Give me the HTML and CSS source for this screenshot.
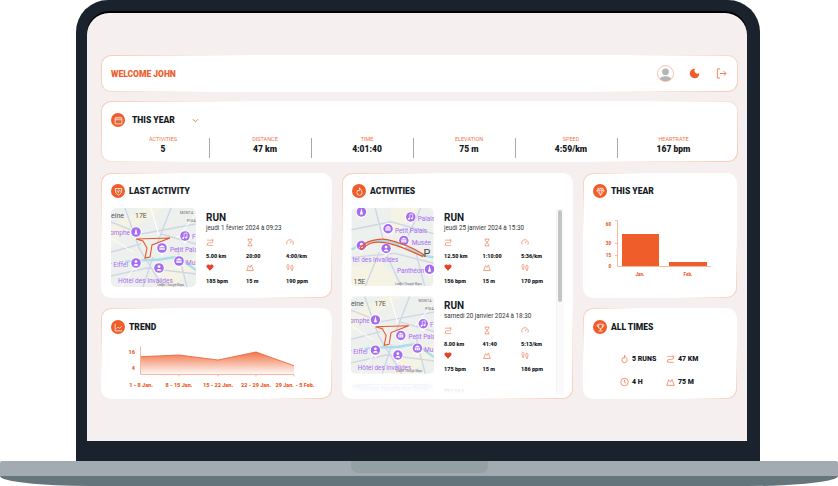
FILE: index.html
```html
<!DOCTYPE html>
<html lang="fr">
<head>
  <meta charset="UTF-8">
  <title>Welcome John</title>
  <link rel="stylesheet" href="styles.css">
</head>
<body>
  <svg class="defs" width="0" height="0">
    <symbol id="i-route" viewBox="0 0 12 12"><path d="M1.500 2.500H8a2 2 0 0 1 0 4H4a2 2 0 0 0 0 4h6.500M9 .8l2 1.700-2 1.700M3 8.800l-2 1.700" fill="none" stroke="currentColor" stroke-width=".9"/></symbol>
    <symbol id="i-time" viewBox="0 0 12 12"><path d="M2.500 1h7M2.500 11h7M3.500 1v2l5 6v2M8.500 1v2l-5 6v2" fill="none" stroke="currentColor"/></symbol>
    <symbol id="i-speed" viewBox="0 0 12 12"><path d="M1.500 9a5 5 0 1 1 9 0M6 7l2-3" fill="none" stroke="currentColor"/></symbol>
    <symbol id="i-heart" viewBox="0 0 12 12"><path d="M6 11 1 5.500C0 3.500 1.500 1.500 3.500 1.500 4.800 1.500 5.500 2.300 6 3c.5-.7 1.200-1.500 2.500-1.500 2 0 3.500 2 2.500 4z" fill="currentColor"/></symbol>
    <symbol id="i-elev" viewBox="0 0 12 12"><path d="M1 10.500 3.500 3 6 6l2-3.500 3 8z" fill="none" stroke="currentColor"/></symbol>
    <symbol id="i-feet" viewBox="0 0 12 12"><path d="M2 2c1-1.500 2.500 0 2.500 2S4 7.500 3.500 9 2 7 1.500 5 1.500 3 2 2zM8 3c1-1 2.500 0 2.500 2s-.5 4-1 5.500S8 9.500 7.500 7.500 7.300 4 8 3z" fill="none" stroke="currentColor"/></symbol>
    <symbol id="i-flame" viewBox="0 0 12 12"><path d="M6 1c.5 2 3.500 3.500 3.500 6.500A3.500 3.500 0 0 1 2.500 7.500C2.500 6 3.500 5 4 4c.5.8 1 1.200 1.500 1.300C6 4 6.200 2.500 6 1z" fill="none" stroke="currentColor"/></symbol>
    <symbol id="i-clock" viewBox="0 0 12 12"><circle cx="6" cy="6" r="5" fill="none" stroke="currentColor"/><path d="M6 3v3.300l2 1.200" fill="none" stroke="currentColor"/></symbol>

    <symbol id="pin" viewBox="0 0 12 14"><path d="M6 14 3.500 10.500h5z" fill="#fff"/><circle cx="6" cy="6" r="5.800" fill="#fff"/><circle cx="6" cy="6" r="4.800" fill="#a66cf0"/><circle cx="6" cy="4.600" r="1.400" fill="#fff"/><path d="M3.600 8.700c0-2.300 4.800-2.300 4.800 0z" fill="#fff"/></symbol>
    <symbol id="pin-note" viewBox="0 0 12 14"><path d="M6 14 3.500 10.500h5z" fill="#fff"/><circle cx="6" cy="6" r="5.800" fill="#fff"/><circle cx="6" cy="6" r="4.800" fill="#a66cf0"/><path d="M5 8V3.500l3-.6V7.500" fill="none" stroke="#fff" stroke-width=".7"/><circle cx="4.200" cy="8" r="1" fill="#fff"/><circle cx="7.200" cy="7.500" r="1" fill="#fff"/></symbol>
    <symbol id="pin-museum" viewBox="0 0 12 14"><path d="M6 14 3.500 10.500h5z" fill="#fff"/><circle cx="6" cy="6" r="5.800" fill="#fff"/><circle cx="6" cy="6" r="4.800" fill="#a66cf0"/><path d="M2.800 5 6 3l3.200 2zM3.400 5.500h5.200v2.500H3.400z" fill="#fff"/><path d="M5 5.500V8M7 5.500V8" stroke="#a66cf0" stroke-width=".5"/></symbol>
    <symbol id="pin-tower" viewBox="0 0 12 14"><path d="M6 14 3.500 10.500h5z" fill="#fff"/><circle cx="6" cy="6" r="5.800" fill="#fff"/><circle cx="6" cy="6" r="4.800" fill="#a66cf0"/><path d="M6 2.300 7.600 8.500H4.400z" fill="#fff"/></symbol>

    <symbol id="map-a" viewBox="0 0 85 79">
      <rect width="85" height="79" fill="#eef0ee"/>
      <path d="M0 18 34 0h18L0 36zM52 62l33-14v12L60 79H44z" fill="#f5f3e4"/>
      <path d="M0 14 30 26 85 16M14 0l14 40 24 39M60 0 46 36M85 36 50 26M0 44l30-8M0 68l36-8 49 6M66 40l10 39M32 79l10-30" fill="none" stroke="#cfd6e4" stroke-width="1.400"/>
      <path d="M0 30 22 44M40 0l8 28M85 6 66 30M10 79 24 58" fill="none" stroke="#fff" stroke-width="1"/>
      <path d="M14 54c12-3 28-1 38-3s16-3 20 1 8 7 13 10" fill="none" stroke="#acdde9" stroke-width="2.400"/>
      <text class="map-dark" x="0" y="10">eine</text>
      <text class="map-dark" x="24" y="10">17E</text>
      <text class="map-tiny" x="69" y="6">MONTA</text>
      <text class="map-tiny" x="76" y="14">PIGA</text>
      <text class="map-label" x="19" y="27" text-anchor="end">omphe</text>
      <text class="map-label" x="81" y="31">F</text>
      <text class="map-label" x="59" y="44">Petit Pala</text>
      <text class="map-label" x="75" y="57">Mu</text>
      <text class="map-label" x="17" y="59" text-anchor="end">r Eiffel</text>
      <text class="map-label" x="7" y="75">Hôtel des Invalides</text>
      <use href="#pin-tower" x="19" y="18" width="12" height="14"/>
      <use href="#pin-note" x="68" y="22" width="12" height="14"/>
      <use href="#pin-museum" x="45" y="34" width="12" height="14"/>
      <use href="#pin-museum" x="62" y="47" width="12" height="14"/>
      <use href="#pin" x="19" y="49" width="12" height="14"/>
      <use href="#pin" x="42" y="54" width="12" height="14"/>
      <path d="M25 31 59 30 41 37 39 49 34 50 36 40 32 33z" fill="none" stroke="#e8562a" stroke-width="1.100"/>
      <text class="map-credit" x="46" y="77.500">Leaflet | Google Maps</text>
    </symbol>

    <symbol id="map-b" viewBox="0 0 83 79">
      <rect width="83" height="79" fill="#eef0ee"/>
      <path d="M40 0h30L40 30zM0 60l30-6 20 25H0z" fill="#f5f3e4"/>
      <path d="M0 22 40 14 83 26M24 0l12 48 14 31M70 0 52 40M0 50l44-4 39 10M14 79l14-34M66 48l8 31" fill="none" stroke="#cfd6e4" stroke-width="1.400"/>
      <path d="M0 42c14-8 28-10 38-8s22 8 34 14l11 2" fill="none" stroke="#acdde9" stroke-width="2.400"/>
      <text class="map-label" x="67" y="13">Palais</text>
      <text class="map-label" x="44" y="25">Petit Palais</text>
      <text class="map-label" x="61" y="37">Musée</text>
      <text class="map-label" x="1" y="55">tel des Invalides</text>
      <text class="map-label" x="46" y="66">Panthéon</text>
      <text class="map-big" x="73" y="50">P</text>
      <text class="map-dark" x="2" y="77">15E</text>
      <use href="#pin-tower" x="4" y="-2" width="12" height="14"/>
      <use href="#pin-note" x="54" y="3" width="12" height="14"/>
      <use href="#pin-museum" x="31" y="15" width="12" height="14"/>
      <use href="#pin-museum" x="47" y="27" width="12" height="14"/>
      <use href="#pin" x="4" y="32" width="12" height="14"/>
      <use href="#pin" x="29" y="35" width="12" height="14"/>
      <use href="#pin-tower" x="73" y="56" width="12" height="14"/>
      <path d="M9 40C14 34 26 30 36 32S58 38 73 47L72 49C60 44 48 37 34 35S16 37 10 42z" fill="none" stroke="#e8562a" stroke-width="1.200"/>
      <text class="map-credit" x="44" y="77.500">Leaflet | Google Maps</text>
    </symbol>

    <symbol id="map-c" viewBox="0 0 83 79">
      <rect width="83" height="79" fill="#eef0ee"/>
      <path d="M0 3C20-2 60-2 83 3" fill="none" stroke="#acdde9" stroke-width="2.400"/>
      <text class="map-label" x="5" y="7">Puteaux Neuilly-sur-Seine</text>
    </symbol>
  </svg>

  <div class="laptop">
    <div class="bezel">
      <main class="screen">

        <header class="card header">
          <span class="welcome">WELCOME JOHN</span>
          <div class="header-icons">
            <svg viewBox="0 0 17 17" width="17" height="17">
              <defs><clipPath id="avatar-clip"><circle cx="8.500" cy="8.500" r="7.800"/></clipPath></defs>
              <g clip-path="url(#avatar-clip)" fill="#b5b5b5">
                <circle cx="8.500" cy="6.800" r="3.400"/>
                <ellipse cx="8.500" cy="15" rx="6" ry="3.800"/>
              </g>
              <circle cx="8.500" cy="8.500" r="8" fill="none" stroke="#f2a98c" stroke-width=".7"/>
            </svg>
            <svg class="moon" viewBox="0 0 12 12" width="11" height="11"><path d="M6.500.8A5.200 5.200 0 1 0 11.200 5.500 3.400 3.400 0 0 1 6.500.8z" fill="#ee5d2a"/></svg>
            <svg viewBox="0 0 12 12" width="11" height="11"><path d="M4.500 1H1.500v10h3M4.500 6H11M8.500 3.500 11 6 8.500 8.500" fill="none" stroke="#f1764a" stroke-width="1"/></svg>
          </div>
        </header>

        <section class="card year">
          <div class="card-title">
            <span class="badge">
              <svg viewBox="0 0 12 12" width="9" height="9"><path d="M1.500 2.500h9v8h-9zM1.500 5h9M4 1v2M8 1v2" fill="none" stroke="#fff"/></svg>
            </span>
            <h2 class="year-name">THIS YEAR</h2>
            <svg class="chevron" viewBox="0 0 8 5" width="7" height="5"><path d="M1 1l3 3 3-3" fill="none" stroke="#f1764a" stroke-width="1.100"/></svg>
          </div>
          <div class="year-stats">
            <div class="year-stat"><span>ACTIVITIES</span><b>5</b></div>
            <div class="year-stat"><span>DISTANCE</span><b>47 km</b></div>
            <div class="year-stat"><span>TIME</span><b>4:01:40</b></div>
            <div class="year-stat"><span>ELEVATION</span><b>75 m</b></div>
            <div class="year-stat"><span>SPEED</span><b>4:59/km</b></div>
            <div class="year-stat"><span>HEARTRATE</span><b>167 bpm</b></div>
          </div>
        </section>

        <div class="grid">
          <section class="card last">
            <div class="card-title">
              <span class="badge">
                <svg viewBox="0 0 12 12" width="9" height="9"><path d="M1.500 2 10.500 2 9.500 8 6 11 2.500 8zM3.500 5l3 1-1 2M6 3.500l3 2" fill="none" stroke="#fff"/></svg>
              </span>
              <h2>LAST ACTIVITY</h2>
            </div>
            <article class="activity">
              <svg class="map" width="85" height="79"><use href="#map-a"/></svg>
              <div class="info">
                <h3>RUN</h3>
                <p>jeudi 1 février 2024 à 09:23</p>
                <div class="stats">
                  <div><svg><use href="#i-route"/></svg><b>5.00 km</b></div>
                  <div><svg><use href="#i-time"/></svg><b>20:00</b></div>
                  <div><svg><use href="#i-speed"/></svg><b>4:00/km</b></div>
                  <div><svg class="solid"><use href="#i-heart"/></svg><b>185 bpm</b></div>
                  <div><svg><use href="#i-elev"/></svg><b>15 m</b></div>
                  <div><svg><use href="#i-feet"/></svg><b>190 ppm</b></div>
                </div>
              </div>
            </article>
          </section>

          <section class="card activities">
            <div class="card-title">
              <span class="badge">
                <svg viewBox="0 0 12 12" width="9" height="9"><use href="#i-flame"/></svg>
              </span>
              <h2>ACTIVITIES</h2>
            </div>
            <div class="list">
              <article class="activity">
                <svg class="map" width="83" height="78"><use href="#map-b"/></svg>
                <div class="info">
                  <h3>RUN</h3>
                  <p>jeudi 25 janvier 2024 à 15:30</p>
                  <div class="stats">
                    <div><svg><use href="#i-route"/></svg><b>12.50 km</b></div>
                    <div><svg><use href="#i-time"/></svg><b>1:10:00</b></div>
                    <div><svg><use href="#i-speed"/></svg><b>5:36/km</b></div>
                    <div><svg class="solid"><use href="#i-heart"/></svg><b>156 bpm</b></div>
                    <div><svg><use href="#i-elev"/></svg><b>15 m</b></div>
                    <div><svg><use href="#i-feet"/></svg><b>170 ppm</b></div>
                  </div>
                </div>
              </article>
              <article class="activity">
                <svg class="map" width="83" height="78"><use href="#map-a"/></svg>
                <div class="info">
                  <h3>RUN</h3>
                  <p>samedi 20 janvier 2024 à 18:30</p>
                  <div class="stats">
                    <div><svg><use href="#i-route"/></svg><b>8.00 km</b></div>
                    <div><svg><use href="#i-time"/></svg><b>41:40</b></div>
                    <div><svg><use href="#i-speed"/></svg><b>5:13/km</b></div>
                    <div><svg class="solid"><use href="#i-heart"/></svg><b>175 bpm</b></div>
                    <div><svg><use href="#i-elev"/></svg><b>15 m</b></div>
                    <div><svg><use href="#i-feet"/></svg><b>186 ppm</b></div>
                  </div>
                </div>
              </article>
              <article class="activity">
                <svg class="map" width="83" height="78"><use href="#map-c"/></svg>
                <div class="info">
                  <h3>RUN</h3>
                </div>
              </article>
            </div>
            <div class="scrollbar"><span></span></div>
          </section>

          <section class="card months">
            <div class="card-title">
              <span class="badge">
                <svg viewBox="0 0 12 12" width="9" height="9"><path d="M3 1.500h6L11 5 6 11 1 5zM1 5h10M4 5l2 6 2-6M3 1.500 4 5 6 1.500 8 5 9 1.500" fill="none" stroke="#fff" stroke-width=".8"/></svg>
              </span>
              <h2>THIS YEAR</h2>
            </div>
            <svg class="chart" viewBox="0 0 154 66" width="154" height="66">
              <g class="chart-ticks">
                <text x="28" y="12" text-anchor="end">60</text>
                <text x="28" y="31" text-anchor="end">30</text>
                <text x="28" y="42.500" text-anchor="end">15</text>
                <text x="28" y="54" text-anchor="end">0</text>
                <text x="57" y="62" text-anchor="middle">Jan.</text>
                <text x="105" y="62" text-anchor="middle">Feb.</text>
              </g>
              <rect x="39" y="20" width="37" height="32" fill="#ee5d2a"/>
              <rect x="86" y="48" width="38" height="4" fill="#ee5d2a"/>
              <path d="M32 6.500h2.500v46H128M32 29.500h2.500M32 41.500h2.500" fill="none" stroke="#f8b9a1"/>
            </svg>
          </section>

          <section class="card trend">
            <div class="card-title">
              <span class="badge">
                <svg viewBox="0 0 12 12" width="9" height="9"><path d="M1.500 1v9.500H11M3.500 7.500l2-2 2 1.500 3-3" fill="none" stroke="#fff"/></svg>
              </span>
              <h2>TREND</h2>
            </div>
            <svg class="chart" viewBox="0 0 231 52" width="231" height="52">
              <defs>
                <linearGradient id="trend-fill" x1="0" y1="0" x2="0" y2="1">
                  <stop offset="0" stop-color="#ee5d2a" stop-opacity=".85"/>
                  <stop offset="1" stop-color="#ee5d2a" stop-opacity=".05"/>
                </linearGradient>
              </defs>
              <path d="M40 16.700 78 15 117 20 155 12 193 25.700V34H40z" fill="url(#trend-fill)"/>
              <path d="M40 16.700 78 15 117 20 155 12 193 25.700" fill="none" stroke="#ee5d2a" stroke-width=".8"/>
              <path d="M39.500 6.500V34.500H193M78 34.500v2M117 34.500v2M155 34.500v2M193 34.500v2" fill="none" stroke="#f8b9a1"/>
              <g class="chart-ticks trend-ticks">
                <text x="34" y="13.500" text-anchor="end">16</text>
                <text x="34" y="29.500" text-anchor="end">4</text>
                <text x="40" y="47" text-anchor="middle">1 - 8 Jan.</text>
                <text x="78" y="47" text-anchor="middle">8 - 15 Jan.</text>
                <text x="117" y="47" text-anchor="middle">15 - 22 Jan.</text>
                <text x="155" y="47" text-anchor="middle">22 - 29 Jan.</text>
                <text x="194" y="47" text-anchor="middle">29 Jan. - 5 Feb.</text>
              </g>
            </svg>
          </section>

          <section class="card times">
            <div class="card-title">
              <span class="badge">
                <svg viewBox="0 0 12 12" width="9" height="9"><path d="M3.500 1.500h5V5a2.500 2.500 0 0 1-5 0zM3.500 2.500H1.500c0 2 .8 3 2.200 3.300M8.500 2.500h2c0 2-.8 3-2.200 3.300M6 7.500v2M3.500 10.500h5" fill="none" stroke="#fff"/></svg>
              </span>
              <h2>ALL TIMES</h2>
            </div>
            <div class="totals">
              <div><svg><use href="#i-flame"/></svg><b>5 RUNS</b></div>
              <div><svg><use href="#i-route"/></svg><b>47 KM</b></div>
              <div><svg><use href="#i-clock"/></svg><b>4 H</b></div>
              <div><svg><use href="#i-elev"/></svg><b>75 M</b></div>
            </div>
          </section>
        </div>

      </main>
    </div>
    <div class="base"><div class="notch"></div></div>
    <div class="base-foot"></div>
  </div>
</body>
</html>
```

FILE: styles.css
```css
/* laptop frame */
html, body { margin: 0; height: 486px; overflow: hidden; background: #fff; }
body { font-family: Roboto, "Liberation Sans", sans-serif; color: #151a24; }
.defs { position: absolute; }

.bezel { width: 684px; height: 461px; box-sizing: border-box; margin-left: 76px; padding: 13px 13px 20px 11px; background: #1a222e; border-radius: 32px 32px 0 0; }
.screen { height: 428px; box-sizing: border-box; padding: 42px 9px 0 14px; background: #f5efef; border-radius: 22px 22px 0 0; box-shadow: 0 -2px 0 #000; }
.base { height: 15px; display: flex; justify-content: center; background: #a2abb1; border-radius: 2px 2px 0 0; }
.notch { width: 137px; height: 12px; background: #93a0a4; border-radius: 0 0 7px 7px; }
.base-foot { height: 10px; background: #64757c; border-radius: 0 0 90px 90px / 0 0 10px 10px; }

/* cards */
.card { box-sizing: border-box; border: 1px solid transparent; border-radius: 10px; background: linear-gradient(#fff, #fff) padding-box, linear-gradient(135deg, #f8c9b2, #fff 22%, #fff 78%, #f8c9b2) border-box; }
.card-title { display: flex; align-items: center; gap: 4px; height: 14px; margin-left: 9px; }
.card-title h2 { margin: 0; font-size: 8.500px; font-weight: 900; }
.badge { width: 14px; height: 14px; flex: none; display: flex; align-items: center; justify-content: center; border-radius: 50%; background: #ee5d2a; color: #fff; }

.header { height: 37px; display: flex; align-items: center; justify-content: space-between; padding: 0 10px 0 9px; }
.welcome { font-size: 8.500px; font-weight: 900; color: #ee5d2a; }
.header-icons { display: flex; align-items: center; gap: 15px; margin-top: -1px; }
.moon { margin-right: 1px; }

.year { height: 61px; margin-top: 9px; padding-top: 11px; }
.year-name { margin-left: 3px !important; }
.chevron { margin-left: 13px; }
.year-stats { display: grid; grid-template-columns: repeat(6, 93px); gap: 9px; margin: 11px 0 0 15px; }
.year-stat { height: 20px; display: flex; flex-direction: column; align-items: center; border-right: 1px solid #aaa; }
.year-stat:last-child { border-right: 0; }
.year-stat span { font-size: 5.500px; line-height: 3px; color: #f1764a; }
.year-stat b { font-size: 8.500px; line-height: 16px; font-weight: 900; }

.grid { display: grid; grid-template-columns: 231px 231px 154px; grid-template-rows: 125px 91px; gap: 10px; margin-top: 11px; }
.last, .activities, .months { padding-top: 10px; }
.trend, .times { padding-top: 11px; }
.activities { grid-column: 2; grid-row: 1 / 3; position: relative; }
.months { grid-column: 3; grid-row: 1; }
.trend { grid-column: 1; grid-row: 2; }
.times { grid-column: 3; grid-row: 2; }

/* activity rows */
.activity { display: flex; gap: 10px; }
.last .activity { margin: 10px 0 0 9px; }
.map { display: block; flex: none; border-radius: 5px; }
.map-label { font: 6.500px Roboto, sans-serif; fill: #a66cf0; }
.map-dark { font: 7px Roboto, sans-serif; fill: #555; }
.map-tiny { font: 3.500px Roboto, sans-serif; fill: #666; letter-spacing: .3px; }
.map-big { font: 11px Roboto, sans-serif; fill: #444; }
.map-credit { font: 2.800px Roboto, sans-serif; fill: #667; }

.info { flex: none; }
.info h3 { margin: 4px 0 0; font-size: 10px; line-height: 11px; font-weight: 700; }
.info p { margin: 1px 0 0; font-size: 6.300px; line-height: 9px; color: #333; }
.stats { display: grid; grid-template-columns: repeat(3, 40px); grid-auto-rows: 25px; margin-top: 5px; }
.stats div { display: flex; flex-direction: column; gap: 6px; }
.stats svg { width: 8px; height: 9px; color: #f1764a; }
.stats svg.solid { color: #e8432a; }
.stats b { font-size: 5.500px; line-height: 7px; font-weight: 900; }

.list { height: 185px; margin: 10px 18px 0 8px; overflow: hidden; }
.list .activity { margin-bottom: 10px; height: 78px; }
.list .stats { grid-template-columns: repeat(3, 38.500px); }
.scrollbar { position: absolute; top: 35px; right: 8px; width: 8px; height: 185px; background: #fafafa; border-left: 1px solid #f3f3f3; box-sizing: border-box; }
.scrollbar span { display: block; width: 4px; height: 92px; margin: 1px 0 0 1px; background: #c4c4c4; border-radius: 2px; }
.activities::after { content: ""; position: absolute; left: 8px; right: 17px; bottom: 4px; height: 14px; background: linear-gradient(rgba(255, 255, 255, .7), #fff); }

/* charts */
.chart { display: block; }
.months .chart { margin: 16px 0 0 -1px; }
.trend .chart { margin: 6px 0 0 -1px; }
.chart-ticks text { font: 900 4.500px Roboto, sans-serif; fill: #ee5d2a; }
.trend-ticks text { font-size: 5.500px; }

.totals { display: grid; grid-template-columns: 46px 46px; grid-auto-rows: 23px; margin: 13px 0 0 36px; }
.totals div { display: flex; align-items: center; gap: 3px; }
.totals svg { width: 9px; height: 10px; color: #f1764a; }
.totals b { font-size: 7px; font-weight: 900; }
```
